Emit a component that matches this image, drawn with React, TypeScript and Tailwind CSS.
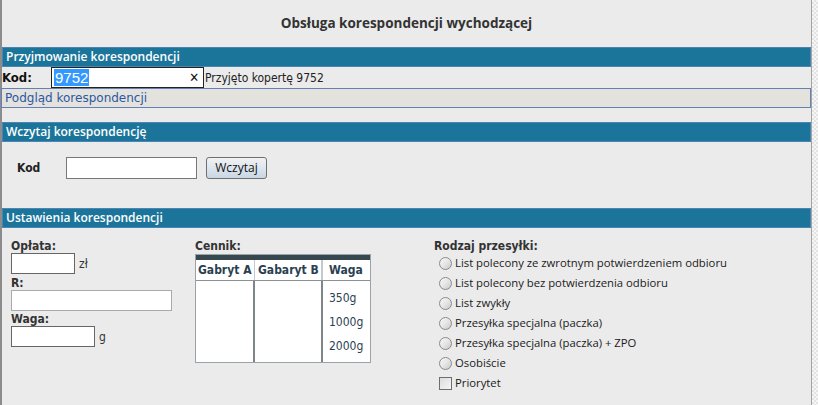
import React from "react";

const Bar = ({ children, className = "" }: { children: React.ReactNode; className?: string }) => (
  <div
    className={`h-[20px] border border-[#4d84b3] bg-[#1b759b] text-white font-semibold text-[12px] leading-[18px] pl-[3px] ${className}`}
    style={{ fontFamily: "'Open Sans', sans-serif" }}
  >
    {children}
  </div>
);

const Radio = ({ label }: { label: string }) => (
  <div className="flex items-center h-[20px]">
    <div className="w-[13px] h-[13px] rounded-full border border-[#8a8a8a] bg-gradient-to-br from-[#f7f7f7] via-[#e6e6e6] to-[#c9c9c9] ml-[5px] mr-[3px]" />
    <span>{label}</span>
  </div>
);

export default function App() {
  return (
    <div className="w-[818px] h-[405px] flex bg-[#ebebeb] text-[#222] overflow-hidden" style={{ fontFamily: "'Open Sans', sans-serif" }}>
      <div className="w-[812px] h-full border-l-2 border-l-[#8c8c8c] border-r border-r-[#a3a3a3] flex flex-col">
        <div className="h-[47px] flex justify-center pt-[14px]">
          <span className="font-bold text-[13.5px] leading-[18px] text-[#333]">Obsługa korespondencji wychodzącej</span>
        </div>
        <Bar>Przyjmowanie korespondencji</Bar>
        <div className="h-[21px] flex items-center text-[12px]" style={{ fontFamily: "'DejaVu Sans Condensed', 'DejaVu Sans', sans-serif" }}>
          <span className="font-bold w-[49px] text-[13px] text-[#111]">Kod:</span>
          <div className="w-[153px] h-[21px] border border-[#222] bg-white flex items-center pl-[2px] pr-[4px]">
            <span className="bg-[#3399ff] text-white text-[15px] leading-[17px] px-[1px]" style={{ fontFamily: "'Liberation Sans', Arial, sans-serif" }}>9752</span>
            <span className="ml-auto text-[13px] leading-none text-[#111]">✕</span>
          </div>
          <span className="ml-[1px] text-[12px]">Przyjęto kopertę 9752</span>
        </div>
        <div className="h-[20px] border border-[#6580b5] bg-[#e4e2dc] text-[#2a58a6] text-[12px] leading-[18px] pl-[3px] -ml-[1px]" style={{ fontFamily: "'DejaVu Sans', sans-serif" }}>
          Podgląd korespondencji
        </div>
        <div className="h-[14px]" />
        <Bar>Wczytaj korespondencję</Bar>
        <div className="h-[66px] pt-[15px] flex items-start" style={{ fontFamily: "'DejaVu Sans Condensed', 'DejaVu Sans', sans-serif" }}>
          <span className="ml-[15px] w-[49px] font-bold text-[12px] leading-[22px] text-[#222]">Kod</span>
          <div className="w-[131px] h-[22px] border border-[#777] bg-white" />
          <button className="ml-[9px] w-[61px] h-[22px] border border-[#707070] rounded-[3px] bg-gradient-to-b from-[#f2f2f2] via-[#dde6ee] to-[#c8d6e2] text-[12px] text-[#111] leading-[18px]" style={{ fontFamily: "'Open Sans', sans-serif" }}>
            Wczytaj
          </button>
        </div>
        <Bar>Ustawienia korespondencji</Bar>
        <div className="flex pt-[11px]" style={{ fontFamily: "'DejaVu Sans Condensed', 'DejaVu Sans', sans-serif" }}>
          <div className="w-[193px] pl-[9px] flex flex-col text-[12px]">
            <span className="font-bold text-[#333] leading-[14px]">Opłata:</span>
            <div className="flex items-center">
              <div className="w-[64px] h-[21px] border border-[#666] bg-white" />
              <span className="ml-[4px] text-[#333]">zł</span>
            </div>
            <span className="font-bold text-[#333] leading-[14px] mt-[2px]">R:</span>
            <div className="w-[161px] h-[21px] border border-[#aaa] bg-white" />
            <span className="font-bold text-[#333] leading-[14px] mt-[1px]">Waga:</span>
            <div className="flex items-center">
              <div className="w-[84px] h-[21px] border border-[#666] bg-white" />
              <span className="ml-[4px] text-[#333]">g</span>
            </div>
          </div>
          <div className="w-[239px] flex flex-col">
            <span className="font-bold text-[12px] text-[#333] leading-[14px]">Cennik:</span>
            <div className="w-[176px] mt-[1px] border border-[#9aa3a8] bg-white">
              <div className="h-[5px] bg-[#37474f]" />
              <div className="flex h-[21px] border-b border-[#8a9296] text-[12px] font-bold text-[#2b3f52] leading-[20px] whitespace-nowrap">
                <div className="w-[59px] pl-[2px] border-r border-[#c3cacf]">Gabryt A</div>
                <div className="w-[68px] pl-[3px] border-r-2 border-[#c3cacf]">Gabaryt B</div>
                <div className="flex-1 pl-[6px]">Waga</div>
              </div>
              <div className="flex h-[81px] text-[12px] text-[#2b3f52]">
                <div className="w-[59px] border-r-2 border-[#7d8589]" />
                <div className="w-[68px] border-r-2 border-[#7d8589]" />
                <div className="flex-1 pl-[6px] pt-[5px] flex flex-col leading-[24px]">
                  <span>350g</span>
                  <span>1000g</span>
                  <span>2000g</span>
                </div>
              </div>
            </div>
          </div>
          <div className="flex flex-col text-[11.3px] text-[#1a1a1a]" style={{ fontFamily: "'Open Sans', sans-serif" }}>
            <span className="font-bold text-[#333] leading-[14px] text-[12px]" style={{ fontFamily: "'DejaVu Sans Condensed', 'DejaVu Sans', sans-serif" }}>Rodzaj przesyłki:</span>
            <div className="flex flex-col">
              <Radio label="List polecony ze zwrotnym potwierdzeniem odbioru" />
              <Radio label="List polecony bez potwierdzenia odbioru" />
              <Radio label="List zwykły" />
              <Radio label="Przesyłka specjalna (paczka)" />
              <Radio label="Przesyłka specjalna (paczka) + ZPO" />
              <Radio label="Osobiście" />
              <div className="flex items-center h-[20px]">
                <div className="w-[13px] h-[13px] border border-[#6e6e6e] bg-gradient-to-br from-[#dcdcdc] to-[#f5f5f5] ml-[5px] mr-[3px]" />
                <span>Priorytet</span>
              </div>
            </div>
          </div>
        </div>
      </div>
      <div className="flex-1 h-full bg-[repeating-conic-gradient(#e4e4e4_0_25%,#f6f6f6_0_50%)] bg-[length:4px_4px]" />
    </div>
  );
}
